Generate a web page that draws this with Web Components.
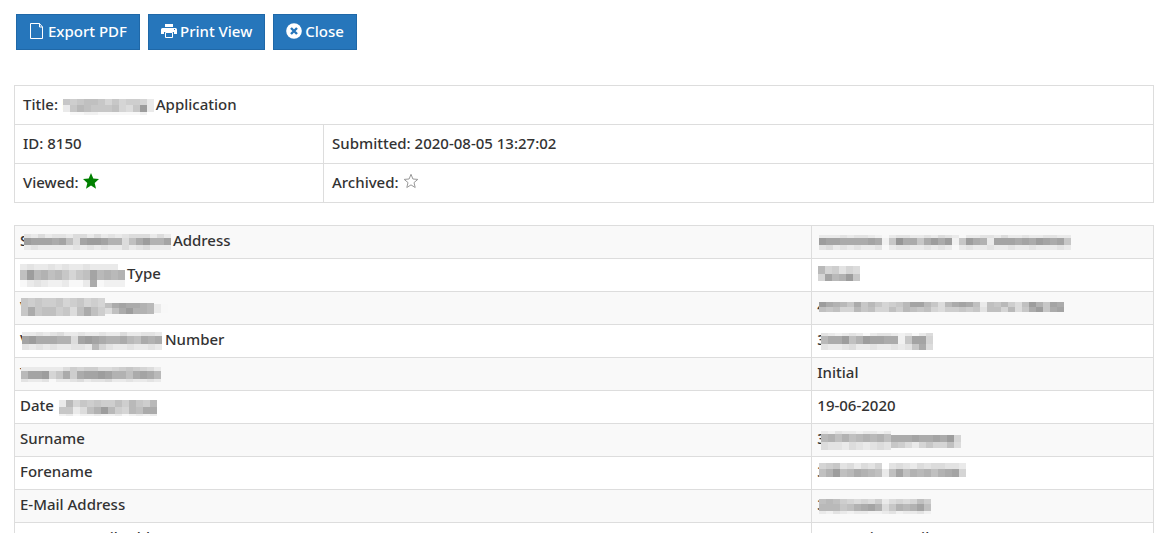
<!DOCTYPE html>
<html lang="en">
<head>
<meta charset="utf-8">
<title>Application</title>
<style>
body { margin: 0; background: #fff; color: #333; font: 500 15px/24px "Noto Sans", "Open Sans", sans-serif; }
</style>
</head>
<body>
<submission-page></submission-page>
<script>
const define = (name, html, after) => {
  const tpl = document.createElement('template');
  tpl.innerHTML = html;
  customElements.define(name, class extends HTMLElement {
    connectedCallback() {
      if (this.shadowRoot) return;
      this.attachShadow({ mode: 'open' }).append(tpl.content.cloneNode(true));
      if (after) after(this, this.shadowRoot);
    }
  });
};

const ICONS = {
  file: '<path d="M1.500 .5h9l3 3.500v11.500h-12zM10.500 .5v3.500h3" fill="none" stroke="#fff"/>',
  print: '<path d="M4 1h8v3H4zM1.500 5h13q1.500 0 1.500 1.500V11h-3V9H3v2H0V6.500Q0 5 1.500 5z" fill="#fff"/><path d="M4.500 9.500h7v5h-7z" fill="none" stroke="#fff"/><path d="M13 6h1v1h-1z" fill="#2676bb"/>',
  close: '<circle cx="8" cy="8" r="7.800" fill="#fff"/><path d="M5 5l6 6M11 5l-6 6" stroke="#2676bb" stroke-width="2.400"/>',
  star: '<path d="M8 0l2.300 5.500 5.700.5-4.300 3.900 1.300 5.800L8 12.600 3 15.700l1.300-5.800L0 6l5.700-.5z" fill="#008000"/>',
  'star-empty': '<path d="M8 1.300l1.900 4.700 4.900.4-3.800 3.200 1.200 4.900L8 11.900l-4.200 2.600L5 9.600 1.200 6.400 6.100 6z" fill="none" stroke="#999"/>'
};

define('ui-icon', `<style>
  :host { display: inline-block; width: 16px; height: 16px; vertical-align: -1px; }
  svg { display: block; width: 100%; height: 100%; }
</style>`, (el, root) => {
  root.innerHTML += `<svg viewBox="0 0 16 16" aria-hidden="true">${ICONS[el.getAttribute('name')]}</svg>`;
});

define('action-button', `<style>
  :host { display: block; }
  button { display: flex; align-items: center; gap: 3px; height: 36px; padding: 0 12px 2px;
    border: 1px solid #1f68a8; border-radius: 0; background: #2676bb; color: #fff; font: inherit; cursor: pointer; }
</style><button type="button"><slot name="icon"></slot><span><slot></slot></span></button>`);

/* Redaction mosaic. rows = "x,y,height,levels;..." with one letter per 7px cell, a (dark) to p (white). */
define('redacted-text', `<style>
  :host { display: inline-block; position: relative; height: 24px; vertical-align: top; }
  svg { position: absolute; left: 0; top: var(--mosaic-top, 1px); width: 100%; height: 100%; overflow: visible; }
</style><slot></slot>`, (el, root) => {
  el.style.width = el.getAttribute('width') + 'px';
  let cells = '';
  for (const row of el.getAttribute('rows').split(';')) {
    const [x, y, h, levels] = row.split(',');
    [...levels].forEach((c, i) => {
      const g = 150 + (c.charCodeAt(0) - 97) * 7;
      cells += `<rect x="${+x + i * 7}" y="${y}" width="7" height="${h}" fill="rgb(${g},${g},${g})"/>`;
    });
  }
  root.innerHTML += `<svg shape-rendering="crispEdges" aria-hidden="true">${cells}</svg>`;
});

const TABLE = `
  :host { display: block; }
  table { width: 100%; border-collapse: collapse; table-layout: fixed; }
  th, td { border: 1px solid #ddd; font-weight: inherit; text-align: left; vertical-align: top; white-space: nowrap; }`;

define('summary-table', `<style>${TABLE}
  .first { width: 309px; }
  td { padding: 6px 8px 8px; }
</style>
<table>
  <colgroup><col class="first"><col></colgroup>
  <tr><td colspan="2">Title: <redacted-text width="90" rows="1,6,6,hihgghjhjiijm;1,12,7,mhfghhhgjkhbm;8,19,3,oonnoooooon">E</redacted-text> Application</td></tr>
  <tr><td>ID: 8150</td><td>Submitted: 2020-08-05 13:27:02</td></tr>
  <tr><td>Viewed: <ui-icon name="star"></ui-icon></td><td>Archived: <ui-icon name="star-empty"></ui-icon></td></tr>
</table>`);

define('field-table', `<style>${TABLE}
  :host { --mosaic-top: 2px; }
  .label { width: 70%; }
  th, td { padding: 2px 5px 6px; }
  tr:nth-child(odd) { background: #f9f9f9; }
</style>
<table>
  <colgroup><col class="label"><col></colgroup>
  <tbody>
  <tr><th scope="row"><redacted-text width="149" rows="4,4,4,lmkmllmkkmkmlmlkkkmkm;4,8,7,bcccdcgkcbbceekgdbeec;4,15,5,mlmmmmmlmlmlmmkmlkmmm">S</redacted-text> Address</th>
    <td><redacted-text width="255" rows="2,5,3,mmmlmllmnomllmmlmklmommllmkmmlmmllmm;2,8,7,bccddddcdnhaddhdbdbnhbdemcccdcdbcdch;2,15,5,lkmlmlmmlomllmmlmlmomlmmlmmlmmlmmmlm"></redacted-text></td></tr>
  <tr><th scope="row"><redacted-text width="103" rows="0,1,6,mlmmlmlmmlmmmm;0,7,10,gbfegfhjhgcfefe;0,17,7,omlmnnmoomdonnn"></redacted-text> Type</th>
    <td><redacted-text width="44" rows="1,3,8,fjiljk;1,11,7,jcfebh"></redacted-text></td></tr>
  <tr><th scope="row"><redacted-text width="140" rows="1,2,9,hihiihjihjij;1,11,9,hdhggihkgdgi;85,7,5,gdcddef;85,12,6,kgdbeef;134,8,9,mo">V</redacted-text></th>
    <td><redacted-text width="250" rows="2,6,5,bdefhdhfhjihfccfhkfdcdgmghfikgbehcd;2,11,5,ghgjjfhgjjgifghgjkiihihlggjfkhdbhdc">4</redacted-text></td></tr>
  <tr><th scope="row"><redacted-text width="141" rows="2,3,4,mmlmlkmmlmmlmmkmmllm;2,7,8,cbdddeekcbcdeedfgded;2,15,6,lmlmlmmllmfjlmmlmmlm">V</redacted-text> Number</th>
    <td><redacted-text width="116" rows="4,4,3,lmnmlmomllmnmomk;4,7,8,fddbgebccddnhccj;4,15,6,lmmlkmmlmmlmlhdk">3</redacted-text></td></tr>
  <tr><th scope="row"><redacted-text width="143" rows="1,5,4,mmmmmmkijiikkjihijkm;1,9,8,fccbjhdidccbceegdcdf;1,17,3,lmmlommlkmllkmmlmmlm">T</redacted-text></th>
    <td>Initial</td></tr>
  <tr><th scope="row">Date <redacted-text width="98" rows="1,5,7,mfjhihiigifhif;1,12,7,hhmkgebfijfgdd;1,19,2,nmonnmnnmonmnm"></redacted-text></th>
    <td>19-06-2020</td></tr>
  <tr><th scope="row">Surname</th>
    <td><redacted-text width="145" rows="4,3,3,mnlmmnmmnm;4,6,8,fegegfefeg;4,14,8,kllmklmlkl;74,7,7,dddcddcdbj;74,14,6,hikmjhjjgk">3</redacted-text></td></tr>
  <tr><th scope="row">Forename</th>
    <td><redacted-text width="148" rows="2,2,6,jihlkmkljplklmklkkllm;2,8,8,gebgfdefgmgcgefegedcj">3</redacted-text></td></tr>
  <tr><th scope="row">E-Mail Address</th>
    <td><redacted-text width="118" rows="2,5,5,gfgijkjkimkjkjgi;2,10,7,fffhgedcekhefecg;2,17,3,mnlmnmmnnmlnmmln">3</redacted-text></td></tr>
  <tr><th scope="row">Repeat E-Mail Address</th><td>340 main_email_repeat</td></tr>
  </tbody>
</table>`);

define('submission-page', `<style>
  :host { display: block; height: 100vh; overflow: hidden; }
  nav { display: flex; gap: 8px; padding: 14px 16px 35px; }
  main { display: grid; gap: 22px; padding: 0 11px 0 14px; }
</style>
<nav>
  <action-button><ui-icon slot="icon" name="file"></ui-icon>Export PDF</action-button>
  <action-button><ui-icon slot="icon" name="print"></ui-icon>Print View</action-button>
  <action-button><ui-icon slot="icon" name="close"></ui-icon>Close</action-button>
</nav>
<main><summary-table></summary-table><field-table></field-table></main>`);
</script>
</body>
</html>
